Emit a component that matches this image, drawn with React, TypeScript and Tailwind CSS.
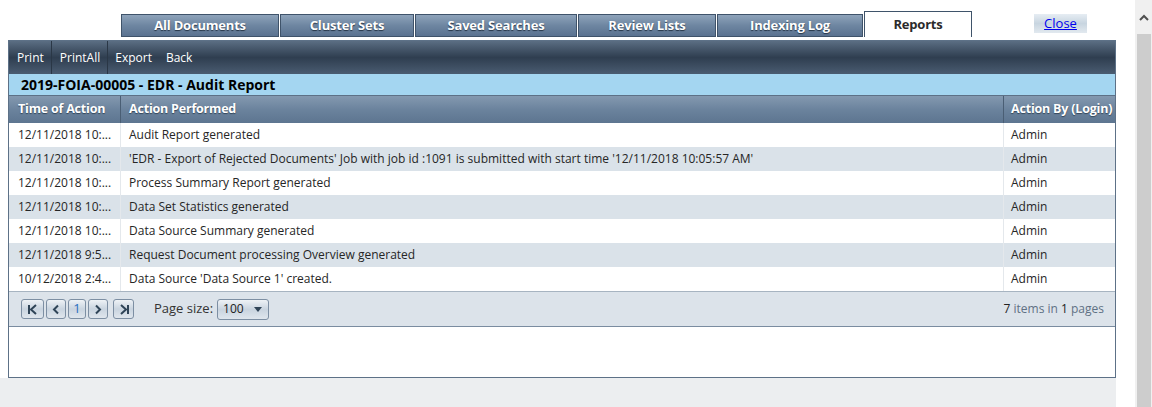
import React from "react";

const rows: [string, string, string][] = [
  ["12/11/2018 10:...", "Audit Report generated", "Admin"],
  ["12/11/2018 10:...", "'EDR - Export of Rejected Documents' Job with job id :1091 is submitted with start time '12/11/2018 10:05:57 AM'", "Admin"],
  ["12/11/2018 10:...", "Process Summary Report generated", "Admin"],
  ["12/11/2018 10:...", "Data Set Statistics generated", "Admin"],
  ["12/11/2018 10:...", "Data Source Summary generated", "Admin"],
  ["12/11/2018 9:5...", "Request Document processing Overview generated", "Admin"],
  ["10/12/2018 2:4...", "Data Source 'Data Source 1' created.", "Admin"],
];

const tabs: [string, number][] = [
  ["All Documents", 158],
  ["Cluster Sets", 134],
  ["Saved Searches", 162],
  ["Review Lists", 138],
  ["Indexing Log", 146],
];

const font = { fontFamily: '"Open Sans", "Noto Sans", "Liberation Sans", sans-serif' };

function PagerBtn({ w, children }: { w: string; children: React.ReactNode }) {
  return (
    <div className={`flex h-[20px] ${w} items-center justify-center rounded-[3px] border border-[#7d8fa3] bg-gradient-to-b from-[#eef2f6] via-[#c9d4df] to-[#dfe6ed] text-[#3c4f63]`}>
      {children}
    </div>
  );
}

export default function App() {
  return (
    <div className="flex h-[407px] w-[1152px] overflow-hidden bg-white text-[12px]" style={font}>
      <div className="flex w-[1135px] flex-col">
        {/* tabs row */}
        <div className="flex h-[40px] items-start">
          <div className="ml-[121px] mt-[11px] flex h-[26px] items-end">
            {tabs.map(([t, w]) => (
              <div
                key={t}
                style={{ width: w }}
                className="mr-[1px] flex h-[23px] items-center justify-center border border-[#3f536a] bg-gradient-to-b from-[#8ea3ba] via-[#6e86a1] to-[#5a7290] text-[13px] font-bold tracking-[-0.2px] text-white [text-shadow:0_1px_1px_#243345]"
              >
                {t}
              </div>
            ))}
            <div className="flex h-[26px] w-[108px] items-center justify-center border border-b-0 border-[#3f536a] bg-white pt-[1px] text-[13px] font-bold tracking-[-0.2px] text-[#2b2b2b]">
              Reports
            </div>
          </div>
          <div className="ml-[62px] mt-[14px] flex h-[19px] w-[53px] items-center justify-center bg-gradient-to-b from-[#e6edf3] via-[#c8d5e0] to-[#e2e9ef]">
            <a href="#" className="text-[13px] text-[#0000ee] underline">Close</a>
          </div>
        </div>

        {/* panel */}
        <div className="ml-[8px] flex h-[338px] w-[1108px] flex-col border border-[#5d7187] bg-white">
          {/* toolbar */}
          <div className="flex h-[33px] items-center bg-gradient-to-b from-[#5b6e83] via-[#2f3e50] to-[#4a5c71] text-[12px] text-white">
            <div className="flex h-full items-center border-r border-[#2a3746] pl-[8px] pr-[7px]">Print</div>
            <div className="flex h-full items-center border-r border-[#2a3746] pl-[8px] pr-[7px]">PrintAll</div>
            <div className="flex h-full items-center pl-[7px] pr-[6px]">Export</div>
            <div className="flex h-full items-center pl-[8px]">Back</div>
          </div>
          {/* title */}
          <div className="flex h-[22px] items-center border-b border-[#5d7187] bg-[#a4d6f1] pl-[12px] text-[14px] font-bold text-black">
            2019-FOIA-00005 - EDR - Audit Report
          </div>
          {/* header */}
          <div className="flex h-[27px] whitespace-nowrap bg-gradient-to-b from-[#8499b0] via-[#6b839d] to-[#5d7590] text-[12.5px] font-bold tracking-[-0.2px] text-white [text-shadow:0_1px_1px_#33465a]">
            <div className="flex w-[112px] items-center border-r border-[#4a5e74] pl-[9px]">Time of Action</div>
            <div className="flex flex-1 items-center border-r border-[#4a5e74] pl-[8px]">Action Performed</div>
            <div className="flex w-[111px] items-center pl-[7px]">Action By (Login)</div>
          </div>
          {/* rows */}
          {rows.map((r, i) => (
            <div key={i} className={`flex h-[24px] whitespace-nowrap text-[12px] text-[#262626] ${i % 2 ? "bg-[#dae2e9]" : "bg-white"}`}>
              <div className="flex w-[112px] items-center border-r border-[#e4e8ec] pl-[9px]">{r[0]}</div>
              <div className="flex flex-1 items-center border-r border-[#e4e8ec] pl-[8px]">{r[1]}</div>
              <div className="flex w-[111px] items-center pl-[7px]">{r[2]}</div>
            </div>
          ))}
          {/* pager */}
          <div className="flex h-[36px] items-center border-y border-t-[#a7b4c1] border-b-[#7a8ca0] bg-[#dce3ea] pl-[12px] pr-[11px]">
            <div className="flex items-center gap-[2px]">
              <PagerBtn w="w-[23px]">
                <svg width="12" height="11" viewBox="0 0 12 11"><path d="M2 1v9M9 1L4 5.5 9 10" stroke="#2f4457" strokeWidth="2" fill="none" /></svg>
              </PagerBtn>
              <PagerBtn w="w-[20px]">
                <svg width="10" height="11" viewBox="0 0 10 11"><path d="M7 1.5L3 5.5 7 9.5" stroke="#2f4457" strokeWidth="2" fill="none" /></svg>
              </PagerBtn>
              <PagerBtn w="w-[18px]">
                <span className="text-[13px] text-[#2a6fc0]">1</span>
              </PagerBtn>
              <PagerBtn w="w-[20px]">
                <svg width="10" height="11" viewBox="0 0 10 11"><path d="M3 1.5L7 5.5 3 9.5" stroke="#2f4457" strokeWidth="2" fill="none" /></svg>
              </PagerBtn>
              <div className="w-[1px]" />
              <PagerBtn w="w-[21px]">
                <svg width="12" height="11" viewBox="0 0 12 11"><path d="M10 1v9M3 1l5 4.5L3 10" stroke="#2f4457" strokeWidth="2" fill="none" /></svg>
              </PagerBtn>
            </div>
            <span className="ml-[20px] text-[13px] text-[#333]">Page size:</span>
            <div className="ml-[4px] flex h-[21px] w-[52px] items-center justify-between rounded-[3px] border border-[#7d8fa3] bg-gradient-to-b from-[#eef2f6] via-[#c9d4df] to-[#dfe6ed] pl-[5px] pr-[6px] text-[12px] text-[#222]">
              <span>100</span>
              <svg width="8" height="5" viewBox="0 0 8 5"><path d="M0 0h8L4 5z" fill="#2f4457" /></svg>
            </div>
            <span className="ml-auto text-[12px] text-[#5f7184]">
              <span className="text-[#222]">7</span> items in <span className="text-[#222]">1</span> pages
            </span>
          </div>
          <div className="flex-1 bg-white" />
        </div>
        <div className="w-[1116px] flex-1 bg-[#eceef0]" />
      </div>
      {/* scrollbar */}
      <div className="flex w-[17px] flex-col items-center bg-[#f0f0f0]">
        <div className="flex h-[34px] items-center justify-center">
          <svg width="10" height="7" viewBox="0 0 10 7"><path d="M1 6l4-4 4 4" stroke="#505050" strokeWidth="2" fill="none" /></svg>
        </div>
        <div className="w-[14px] flex-1 bg-[#cdcdcd]" />
      </div>
    </div>
  );
}
